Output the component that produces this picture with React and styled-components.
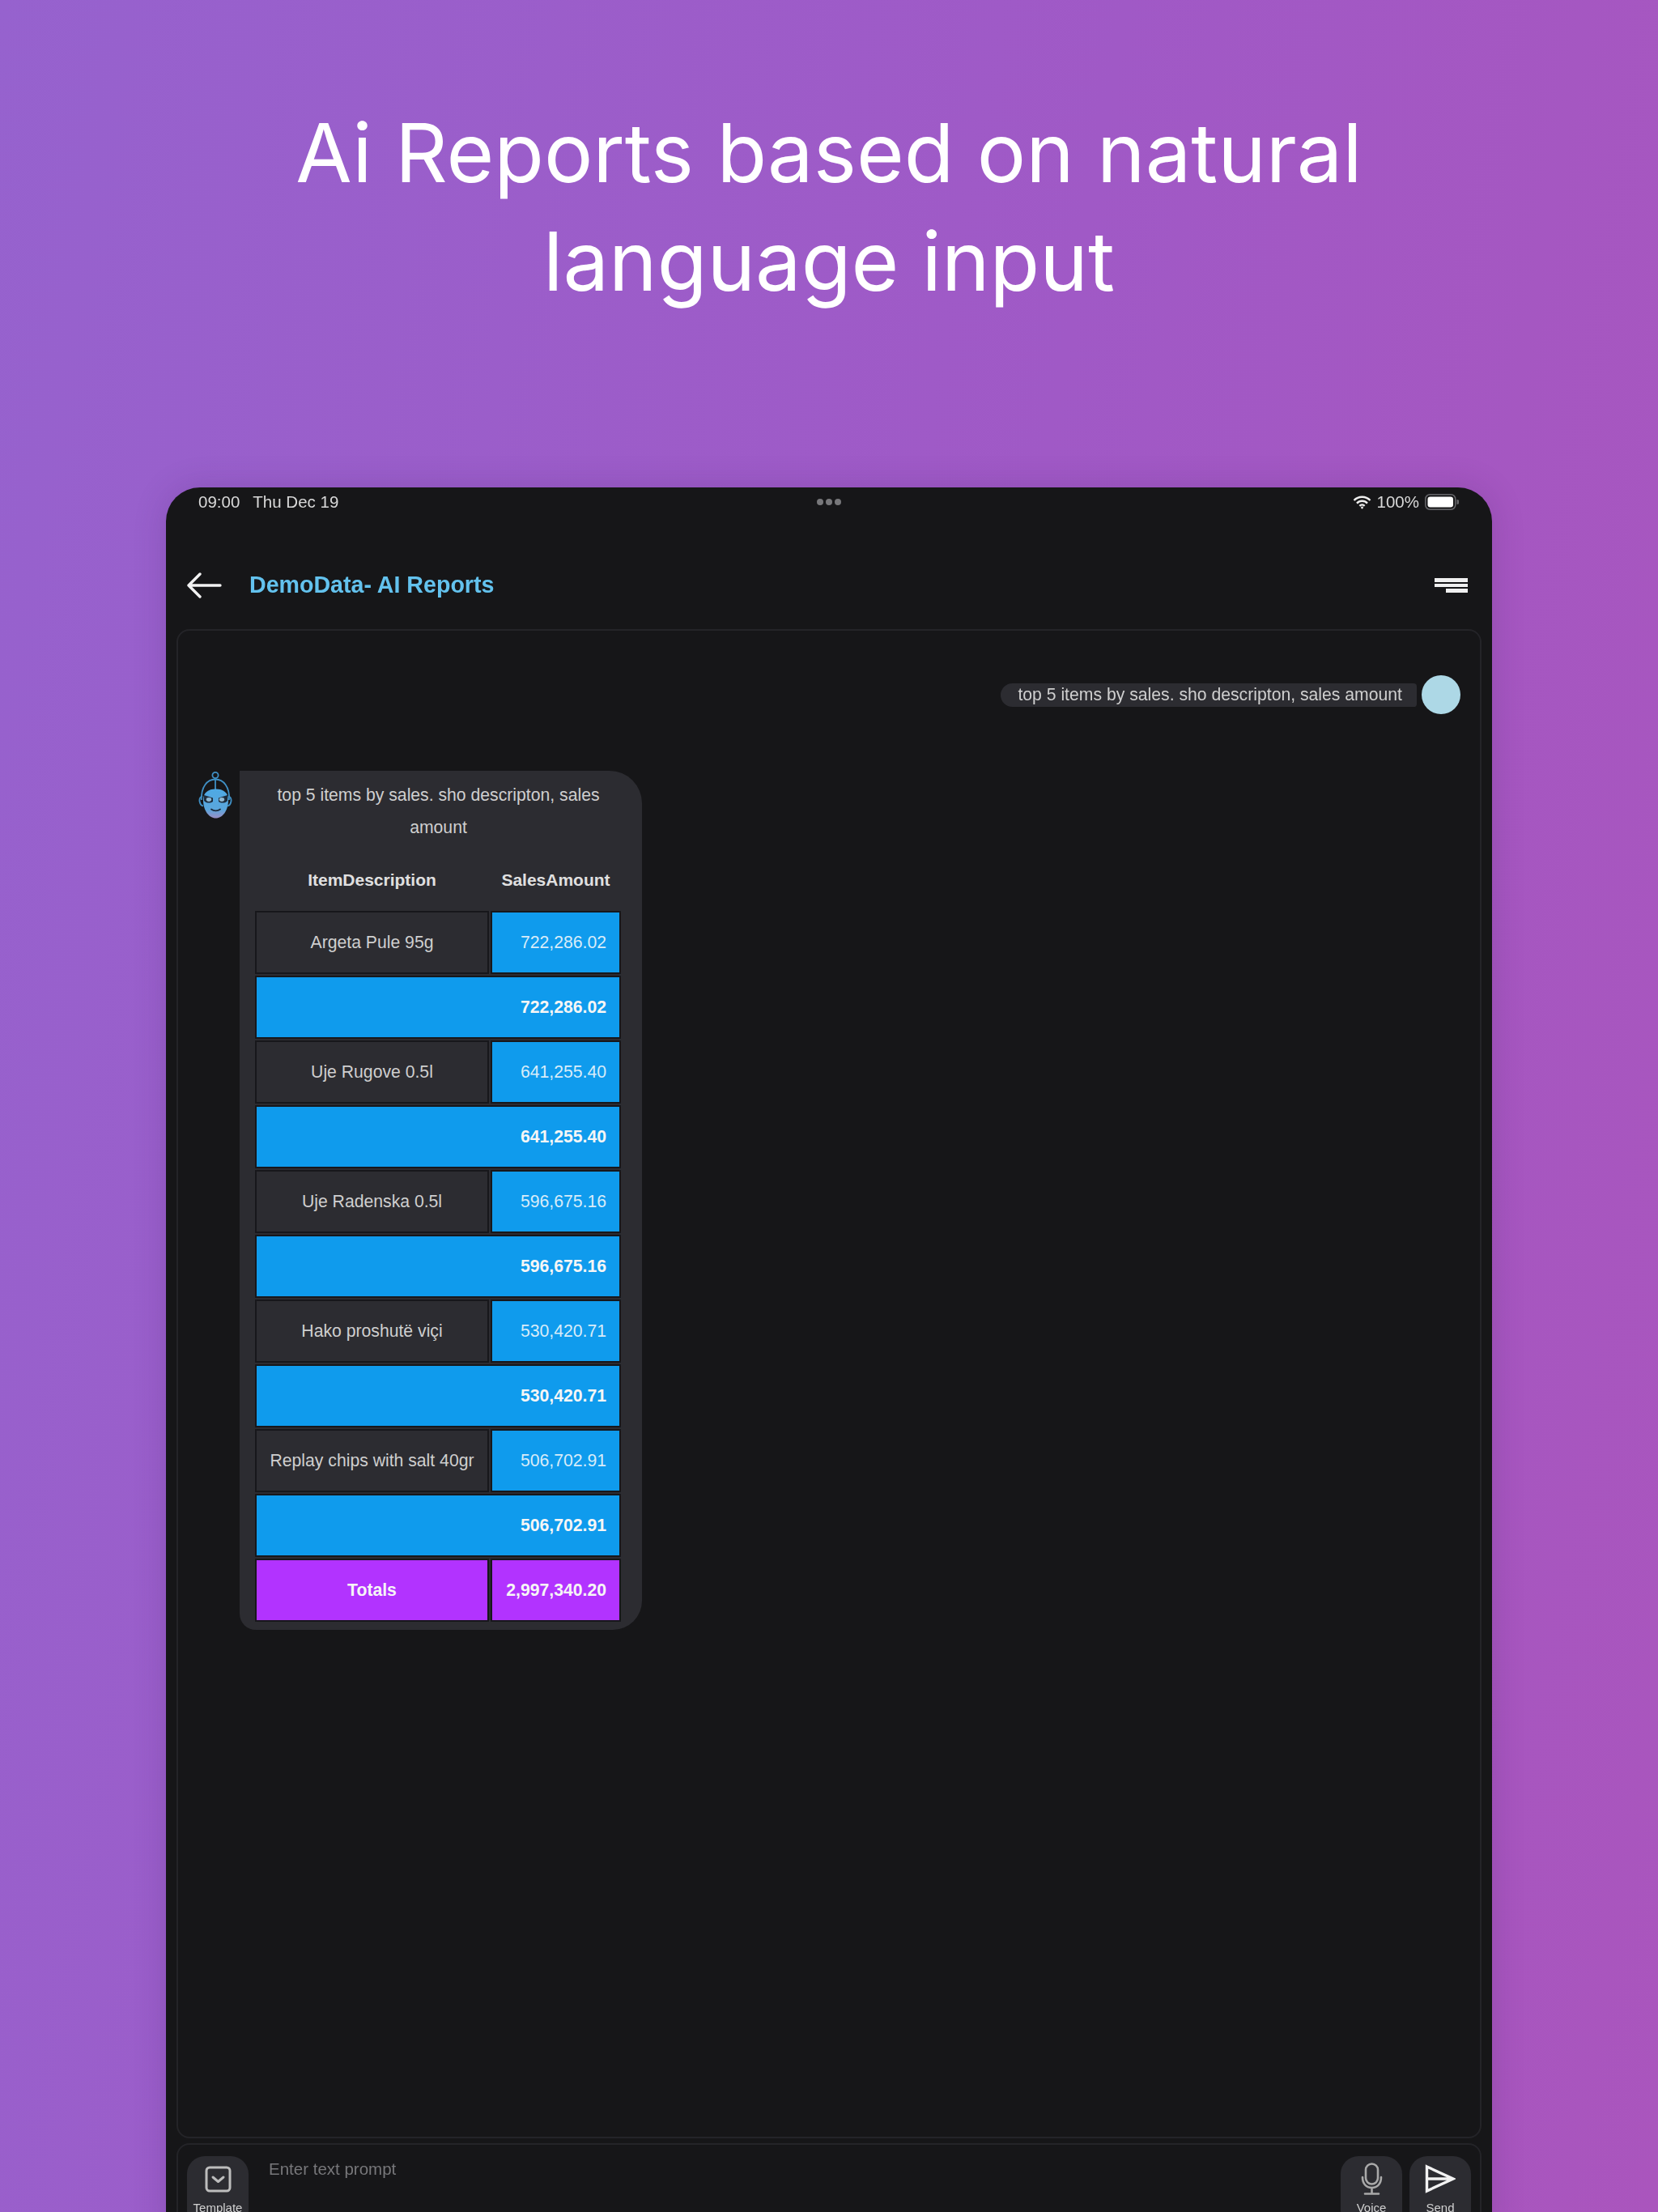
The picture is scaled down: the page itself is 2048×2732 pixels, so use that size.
import React from 'react'
import styled, { createGlobalStyle } from 'styled-components'

const GlobalStyle = createGlobalStyle`
  html, body {
    margin: 0;
    padding: 0;
    background: #a05dc8;
  }
  * { box-sizing: border-box; }
`

const Page = styled.div`
  width: 2048px;
  height: 2732px;
  overflow: hidden;
  display: flex;
  flex-direction: column;
  align-items: center;
  background: linear-gradient(100deg, #9662ce 0%, #a059c6 55%, #aa55bd 100%);
`

const Headline = styled.h1`
  width: 100%;
  height: 602px;
  flex-shrink: 0;
  margin: 0;
  padding-top: 121px;
  font-family: Inter, sans-serif;
  font-weight: 400;
  font-size: 100.8px;
  line-height: 134px;
  color: #fff;
  text-align: center;
`

const Device = styled.div`
  width: 1638px;
  flex: 1 0 auto;
  padding: 0 13px;
  display: flex;
  flex-direction: column;
  background: #161618;
  border-radius: 42px 42px 0 0;
  box-shadow: 0 0 40px rgba(60, 20, 90, 0.18);
  font-family: "Liberation Sans", Arial, sans-serif;
  filter: blur(0.7px);
`

const StatusBar = styled.div`
  height: 36px;
  padding: 0 28px 0 27px;
  display: grid;
  grid-template-columns: 1fr auto 1fr;
  align-items: center;
  color: #d8d8d8;
  font-size: 20.5px;
`

const StatusLeft = styled.div`
  display: flex;
  gap: 16px;
`

const StatusRight = styled.div`
  display: flex;
  justify-content: flex-end;
  align-items: center;
  gap: 7px;
`

const Dots = styled.div`
  display: flex;
  gap: 3px;
`

const Dot = styled.span`
  width: 8px;
  height: 8px;
  border-radius: 50%;
  background: #77777a;
`

const Header = styled.div`
  height: 139px;
  padding: 30px 17px 0 12px;
  display: flex;
  align-items: center;
`

const Title = styled.div`
  margin-left: 34px;
  flex: 1;
  color: #63c2ee;
  font-size: 28.6px;
  font-weight: 700;
`

const ChatPanel = styled.div`
  height: 1864px;
  flex-shrink: 0;
  padding-top: 55px;
  border: 2px solid #242428;
  border-radius: 16px;
  display: flex;
  flex-direction: column;
  gap: 70px;
`

const UserRow = styled.div`
  padding-right: 24px;
  display: flex;
  justify-content: flex-end;
  align-items: center;
  gap: 6px;
`

const UserPill = styled.div`
  height: 29px;
  padding: 0 18px 0 21px;
  display: flex;
  align-items: center;
  background: #2c2c31;
  color: #cfcfcf;
  font-size: 21.2px;
  border-radius: 15px 4px 4px 15px;
`

const UserAvatar = styled.div`
  width: 48px;
  height: 48px;
  border-radius: 50%;
  background: #add8e6;
`

const BotRow = styled.div`
  padding-left: 25px;
  display: flex;
  align-items: flex-start;
  gap: 7px;
`

const Bubble = styled.div`
  width: 497px;
  padding: 10px 25px 10px 19px;
  background: #2c2c31;
  border-radius: 0 40px 36px 20px;
`

const Prompt = styled.div`
  padding: 0 20px;
  color: #cfcfcf;
  font-size: 21.2px;
  line-height: 40px;
  text-align: center;
`

const HeadRow = styled.div`
  height: 60px;
  margin: 15px 0 8px;
  display: grid;
  grid-template-columns: 289px 161px;
  column-gap: 2px;
  align-items: center;
`

const HeadCell = styled.div`
  text-align: center;
  color: #e0e0e0;
  font-size: 21px;
  font-weight: 700;
`

const Table = styled.div`
  display: grid;
  grid-template-columns: 289px 161px;
  grid-auto-rows: 78px;
  gap: 2px;
`

const Cell = styled.div`
  display: flex;
  align-items: center;
  justify-content: ${p => (p.$right ? 'flex-end' : 'center')};
  padding-right: ${p => (p.$right ? '16px' : '0')};
  grid-column: ${p => (p.$wide ? '1 / -1' : 'auto')};
  background: ${p => p.$bg || '#2c2c31'};
  border: 2px solid #17171b;
  color: ${p => (p.$bold ? '#f6f6f6' : p.$bg ? '#d8ecf9' : '#cfcfcf')};
  font-size: 21.2px;
  font-weight: ${p => (p.$bold ? 700 : 400)};
  white-space: nowrap;
`

const InputPanel = styled.div`
  height: 120px;
  flex-shrink: 0;
  margin-top: 6px;
  padding: 14px 11px 0 11px;
  border: 2px solid #242428;
  border-radius: 16px 16px 0 0;
  display: flex;
  align-items: flex-start;
`

const Placeholder = styled.div`
  flex: 1;
  margin: 4px 0 0 25px;
  color: #77777a;
  font-size: 20.5px;
  line-height: 24px;
`

const ActionGroup = styled.div`
  display: flex;
  gap: 9px;
`

const ActionButton = styled.div`
  width: 76px;
  height: 90px;
  padding-top: 8px;
  display: flex;
  flex-direction: column;
  align-items: center;
  background: #2c2c31;
  border-radius: 22px;
  color: #d0d0d0;
`

const IconSlot = styled.div`
  height: 40px;
  display: flex;
  align-items: center;
`

const ActionLabel = styled.span`
  margin-top: 8px;
  font-size: 15px;
  line-height: 16px;
`

const rows = [
  ['Argeta Pule 95g', '722,286.02'],
  ['Uje Rugove 0.5l', '641,255.40'],
  ['Uje Radenska 0.5l', '596,675.16'],
  ['Hako proshutë viçi', '530,420.71'],
  ['Replay chips with salt 40gr', '506,702.91'],
]

const BLUE = '#0f9bed'
const PURPLE = '#b233ff'

function BackArrow() {
  return (
    <svg width="44" height="32" viewBox="0 0 44 32" fill="none" stroke="#f2f2f2" strokeWidth="3.4" strokeLinecap="round" strokeLinejoin="round">
      <path d="M42 16H3M17 2L3 16l14 14" />
    </svg>
  )
}

function MenuIcon() {
  return (
    <svg width="41" height="18" viewBox="0 0 41 18" fill="#f0f0f0">
      <rect width="41" height="5" y="0" />
      <rect width="41" height="4" y="7" />
      <rect x="14" width="27" height="5" y="13" />
    </svg>
  )
}

function WifiIcon() {
  return (
    <svg width="23" height="17" viewBox="0 0 23 17" fill="none" stroke="#eee" strokeWidth="2.4">
      <path d="M1.5 6a14 14 0 0 1 20 0" />
      <path d="M5 9.6a9 9 0 0 1 13 0" />
      <path d="M8.4 12.8a4.4 4.4 0 0 1 6.2 0" />
      <circle cx="11.5" cy="15" r="1.4" fill="#eee" stroke="none" />
    </svg>
  )
}

function BatteryIcon() {
  return (
    <svg width="42" height="20" viewBox="0 0 42 20">
      <rect x="0.75" y="0.75" width="37" height="18.5" rx="5.5" fill="none" stroke="#66666a" strokeWidth="1.5" />
      <rect x="3.5" y="3.5" width="31.5" height="13" rx="3.2" fill="#fff" />
      <path d="M39.5 7a3 3 0 0 1 0 6z" fill="#66666a" />
    </svg>
  )
}

function BotAvatar() {
  return (
    <svg width="44" height="60" viewBox="0 0 44 60" fill="none">
      <defs>
        <linearGradient id="face" x1="0" y1="0" x2="0" y2="1">
          <stop offset="0" stopColor="#4ea9e4" />
          <stop offset="0.7" stopColor="#5aa6dc" />
          <stop offset="1" stopColor="#9a8ec4" />
        </linearGradient>
      </defs>
      <circle cx="21" cy="5.5" r="3.6" stroke="#3f8fc4" strokeWidth="1.8" />
      <path d="M21 9V23" stroke="#3f8fc4" strokeWidth="1.8" />
      <path d="M4 36C3 20 11 10.5 21 10.5S39 20 38 36" stroke="#3f8fc4" strokeWidth="1.8" />
      <path d="M5 31c-3 1.5-4 4-3.4 7s2.4 5 4.4 5.5M37 31c3 1.5 4 4 3.4 7s-2.4 5-4.4 5.5" stroke="#3f8fc4" strokeWidth="1.8" />
      <path d="M6 36C6 27 12 22.5 21.5 22.5S37 27 37 36c0 13-7 22.500-15.500 22.500S6 49 6 36z" fill="url(#face)" />
      <path d="M7 30l11 3.5V38c-3 2.500-9 2-11-1zM36 30l-11 3.5V38c3 2.500 9 2 11-1z" fill="#1d2c3c" />
      <ellipse cx="13" cy="35.5" rx="3.2" ry="2.4" fill="#8fb8d2" />
      <ellipse cx="29" cy="35.5" rx="3.2" ry="2.4" fill="#8fb8d2" />
      <path d="M16 47.5c3 2.4 8 2.4 11 0" stroke="#1d2c3c" strokeWidth="1.8" strokeLinecap="round" />
    </svg>
  )
}

function TemplateIcon() {
  return (
    <svg width="33" height="33" viewBox="0 0 33 33" fill="none" stroke="#bdbdbd" strokeWidth="3" strokeLinecap="round" strokeLinejoin="round">
      <rect x="2" y="2" width="29" height="29" rx="4" />
      <path d="M10 14l6.5 5.5L23 14" />
    </svg>
  )
}

function MicIcon() {
  return (
    <svg width="27" height="40" viewBox="0 0 27 40" fill="none" stroke="#a9a9a9" strokeWidth="2.6" strokeLinecap="round">
      <rect x="6" y="1.5" width="15" height="25" rx="7.5" />
      <path d="M2 18c0 8 4.5 13 11.5 13S25 26 25 18M13.5 31v7M5 38.500h17" />
    </svg>
  )
}

function SendIcon() {
  return (
    <svg width="38" height="36" viewBox="0 0 38 36" fill="none" stroke="#f2f2f2" strokeWidth="3.4">
      <path d="M2.500 3L35 18 2.500 33zM2.500 18H35" />
    </svg>
  )
}

function Action({ icon, label }) {
  return (
    <ActionButton>
      <IconSlot>{icon}</IconSlot>
      <ActionLabel>{label}</ActionLabel>
    </ActionButton>
  )
}

export default function App() {
  return (
    <Page>
      <GlobalStyle />
      <Headline>
        Ai Reports based on natural
        <br />
        language input
      </Headline>
      <Device>
        <StatusBar>
          <StatusLeft>
            <span>09:00</span>
            <span>Thu Dec 19</span>
          </StatusLeft>
          <Dots>
            <Dot />
            <Dot />
            <Dot />
          </Dots>
          <StatusRight>
            <WifiIcon />
            <span>100%</span>
            <BatteryIcon />
          </StatusRight>
        </StatusBar>
        <Header>
          <BackArrow />
          <Title>DemoData- AI Reports</Title>
          <MenuIcon />
        </Header>
        <ChatPanel>
          <UserRow>
            <UserPill>top 5 items by sales. sho descripton, sales amount</UserPill>
            <UserAvatar />
          </UserRow>
          <BotRow>
            <BotAvatar />
            <Bubble>
              <Prompt>top 5 items by sales. sho descripton, sales amount</Prompt>
              <HeadRow>
                <HeadCell>ItemDescription</HeadCell>
                <HeadCell>SalesAmount</HeadCell>
              </HeadRow>
              <Table>
                {rows.map(([name, amount]) => (
                  <React.Fragment key={name}>
                    <Cell>{name}</Cell>
                    <Cell $right $bg={BLUE}>{amount}</Cell>
                    <Cell $right $wide $bold $bg={BLUE}>{amount}</Cell>
                  </React.Fragment>
                ))}
                <Cell $bold $bg={PURPLE}>Totals</Cell>
                <Cell $right $bold $bg={PURPLE}>2,997,340.20</Cell>
              </Table>
            </Bubble>
          </BotRow>
        </ChatPanel>
        <InputPanel>
          <Action icon={<TemplateIcon />} label="Template" />
          <Placeholder>Enter text prompt</Placeholder>
          <ActionGroup>
            <Action icon={<MicIcon />} label="Voice" />
            <Action icon={<SendIcon />} label="Send" />
          </ActionGroup>
        </InputPanel>
      </Device>
    </Page>
  )
}
